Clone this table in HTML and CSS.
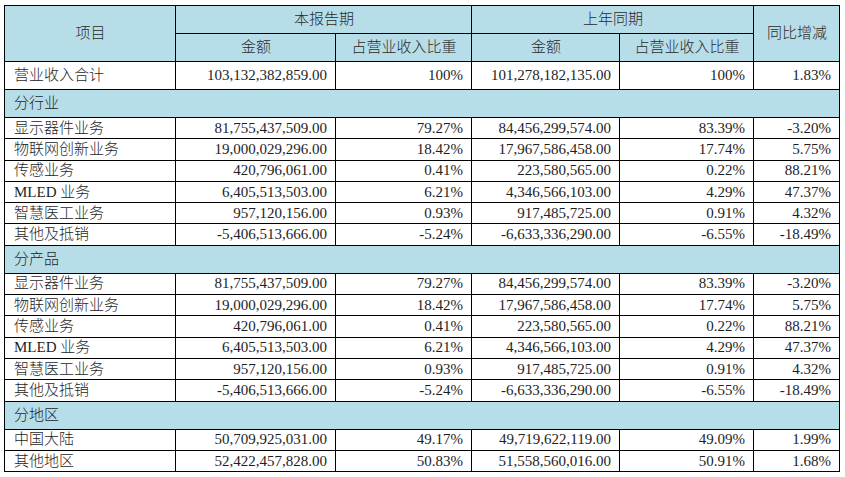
FILE: index.html
```html
<!DOCTYPE html>
<html lang="zh">
<head>
<meta charset="utf-8">
<link rel="stylesheet" href="styles.css">
</head>
<body>
<div class="wrap">
<table class="rev">
<colgroup>
<col class="c1"><col class="c2"><col class="c3"><col class="c4"><col class="c5"><col class="c6">
</colgroup>
<thead>
<tr class="hr">
<th rowspan="2">项目</th>
<th colspan="2">本报告期</th>
<th colspan="2">上年同期</th>
<th rowspan="2">同比增减</th>
</tr>
<tr class="hr">
<th>金额</th><th>占营业收入比重</th><th>金额</th><th>占营业收入比重</th>
</tr>
</thead>
<tbody>
<tr class="tot"><td class="lbl">营业收入合计</td><td>103,132,382,859.00</td><td>100%</td><td>101,278,182,135.00</td><td>100%</td><td>1.83%</td></tr>
<tr class="sec"><td colspan="6">分行业</td></tr>
<tr class="dr"><td class="lbl">显示器件业务</td><td>81,755,437,509.00</td><td>79.27%</td><td>84,456,299,574.00</td><td>83.39%</td><td>-3.20%</td></tr>
<tr class="dr"><td class="lbl">物联网创新业务</td><td>19,000,029,296.00</td><td>18.42%</td><td>17,967,586,458.00</td><td>17.74%</td><td>5.75%</td></tr>
<tr class="dr"><td class="lbl">传感业务</td><td>420,796,061.00</td><td>0.41%</td><td>223,580,565.00</td><td>0.22%</td><td>88.21%</td></tr>
<tr class="dr"><td class="lbl">MLED 业务</td><td>6,405,513,503.00</td><td>6.21%</td><td>4,346,566,103.00</td><td>4.29%</td><td>47.37%</td></tr>
<tr class="dr"><td class="lbl">智慧医工业务</td><td>957,120,156.00</td><td>0.93%</td><td>917,485,725.00</td><td>0.91%</td><td>4.32%</td></tr>
<tr class="dr"><td class="lbl">其他及抵销</td><td>-5,406,513,666.00</td><td>-5.24%</td><td>-6,633,336,290.00</td><td>-6.55%</td><td>-18.49%</td></tr>
<tr class="sec"><td colspan="6">分产品</td></tr>
<tr class="dr"><td class="lbl">显示器件业务</td><td>81,755,437,509.00</td><td>79.27%</td><td>84,456,299,574.00</td><td>83.39%</td><td>-3.20%</td></tr>
<tr class="dr"><td class="lbl">物联网创新业务</td><td>19,000,029,296.00</td><td>18.42%</td><td>17,967,586,458.00</td><td>17.74%</td><td>5.75%</td></tr>
<tr class="dr"><td class="lbl">传感业务</td><td>420,796,061.00</td><td>0.41%</td><td>223,580,565.00</td><td>0.22%</td><td>88.21%</td></tr>
<tr class="dr"><td class="lbl">MLED 业务</td><td>6,405,513,503.00</td><td>6.21%</td><td>4,346,566,103.00</td><td>4.29%</td><td>47.37%</td></tr>
<tr class="dr"><td class="lbl">智慧医工业务</td><td>957,120,156.00</td><td>0.93%</td><td>917,485,725.00</td><td>0.91%</td><td>4.32%</td></tr>
<tr class="dr"><td class="lbl">其他及抵销</td><td>-5,406,513,666.00</td><td>-5.24%</td><td>-6,633,336,290.00</td><td>-6.55%</td><td>-18.49%</td></tr>
<tr class="sec"><td colspan="6">分地区</td></tr>
<tr class="dr"><td class="lbl">中国大陆</td><td>50,709,925,031.00</td><td>49.17%</td><td>49,719,622,119.00</td><td>49.09%</td><td>1.99%</td></tr>
<tr class="dr"><td class="lbl">其他地区</td><td>52,422,457,828.00</td><td>50.83%</td><td>51,558,560,016.00</td><td>50.91%</td><td>1.68%</td></tr>
</tbody>
</table>
</div>
</body>
</html>
```

FILE: styles.css
```css
html, body {
  margin: 0;
  padding: 0;
  background: #ffffff;
}
.wrap {
  padding: 5px 0 0 4px;
}
.rev {
  border-collapse: collapse;
  table-layout: fixed;
  width: 835px;
  font-family: "Liberation Serif", "Noto Sans CJK SC", serif;
  font-size: 15px;
  font-weight: 300;
  color: #1e1e1e;
}
.c1 { width: 171px; }
.c2 { width: 160px; }
.c3 { width: 136px; }
.c4 { width: 148px; }
.c5 { width: 134px; }
.c6 { width: 86px; }
.rev th, .rev td {
  border: 1px solid #000;
  padding: 0 8px 0 9px;
  line-height: 17px;
  white-space: nowrap;
  overflow: hidden;
}
.rev th {
  background: #b7dde8;
  font-weight: 300;
  text-align: center;
  color: #2a2a2a;
}
.hr { height: 28px; }
.tot { height: 28px; }
.sec { height: 28px; }
.dr { height: 21.3px; }
.rev td { text-align: right; }
.rev td.lbl { text-align: left; }
.sec td {
  background: #b7dde8;
  text-align: left;
}
```
